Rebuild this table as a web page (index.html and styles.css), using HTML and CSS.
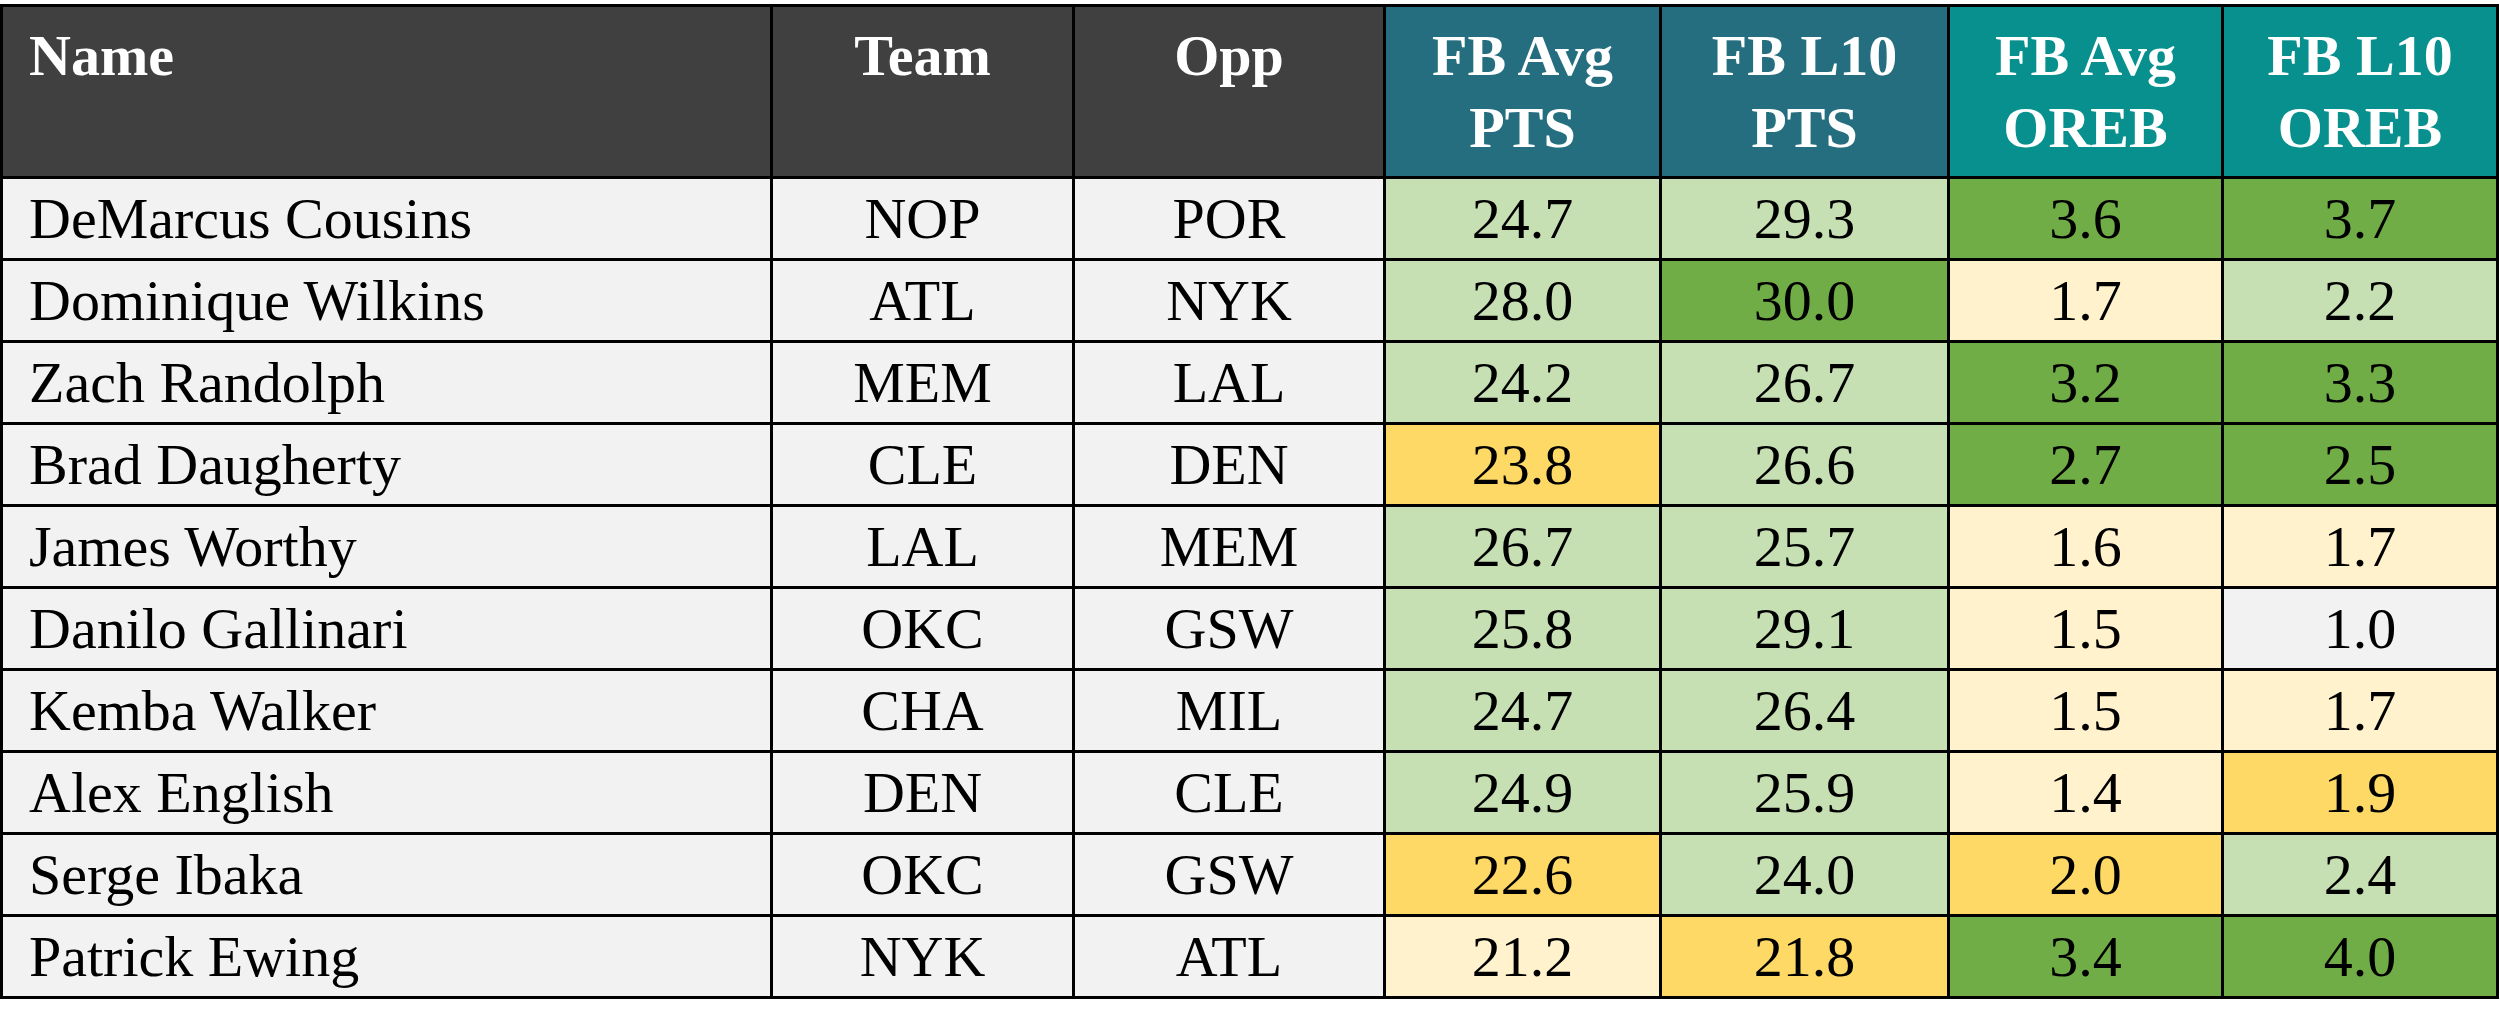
FILE: index.html
```html
<!DOCTYPE html>
<html>
<head>
<meta charset="utf-8">
<link rel="stylesheet" href="styles.css">
</head>
<body>
<table class="stats">
  <colgroup>
    <col class="c-name"><col class="c-team"><col class="c-opp"><col class="c-s1"><col class="c-s2"><col class="c-s3"><col class="c-s4">
  </colgroup>
  <thead>
    <tr>
      <th class="h-dark left">Name</th>
      <th class="h-dark">Team</th>
      <th class="h-dark">Opp</th>
      <th class="h-blue">FB Avg<br>PTS</th>
      <th class="h-blue">FB L10<br>PTS</th>
      <th class="h-teal">FB Avg<br>OREB</th>
      <th class="h-teal">FB L10<br>OREB</th>
    </tr>
  </thead>
  <tbody>
    <tr><td class="name">DeMarcus Cousins</td><td>NOP</td><td>POR</td><td class="lg">24.7</td><td class="lg">29.3</td><td class="dg">3.6</td><td class="dg">3.7</td></tr>
    <tr><td class="name">Dominique Wilkins</td><td>ATL</td><td>NYK</td><td class="lg">28.0</td><td class="dg">30.0</td><td class="ly">1.7</td><td class="lg">2.2</td></tr>
    <tr><td class="name">Zach Randolph</td><td>MEM</td><td>LAL</td><td class="lg">24.2</td><td class="lg">26.7</td><td class="dg">3.2</td><td class="dg">3.3</td></tr>
    <tr><td class="name">Brad Daugherty</td><td>CLE</td><td>DEN</td><td class="yl">23.8</td><td class="lg">26.6</td><td class="dg">2.7</td><td class="dg">2.5</td></tr>
    <tr><td class="name">James Worthy</td><td>LAL</td><td>MEM</td><td class="lg">26.7</td><td class="lg">25.7</td><td class="ly">1.6</td><td class="ly">1.7</td></tr>
    <tr><td class="name">Danilo Gallinari</td><td>OKC</td><td>GSW</td><td class="lg">25.8</td><td class="lg">29.1</td><td class="ly">1.5</td><td class="gr">1.0</td></tr>
    <tr><td class="name">Kemba Walker</td><td>CHA</td><td>MIL</td><td class="lg">24.7</td><td class="lg">26.4</td><td class="ly">1.5</td><td class="ly">1.7</td></tr>
    <tr><td class="name">Alex English</td><td>DEN</td><td>CLE</td><td class="lg">24.9</td><td class="lg">25.9</td><td class="ly">1.4</td><td class="yl">1.9</td></tr>
    <tr><td class="name">Serge Ibaka</td><td>OKC</td><td>GSW</td><td class="yl">22.6</td><td class="lg">24.0</td><td class="yl">2.0</td><td class="lg">2.4</td></tr>
    <tr><td class="name">Patrick Ewing</td><td>NYK</td><td>ATL</td><td class="ly">21.2</td><td class="yl">21.8</td><td class="dg">3.4</td><td class="dg">4.0</td></tr>
  </tbody>
</table>
</body>
</html>
```
FILE: styles.css
```css
html, body {
  margin: 0;
  padding: 0;
  background: #ffffff;
}
body {
  padding-top: 4px;
  font-family: "Liberation Serif", "Times New Roman", serif;
}
.stats {
  border-collapse: collapse;
  table-layout: fixed;
  width: 2496px;
  font-size: 58px;
  color: #000;
}
.c-name { width: 770px; }
.c-team { width: 302px; }
.c-opp { width: 311px; }
.c-s1 { width: 276px; }
.c-s2 { width: 288px; }
.c-s3 { width: 274px; }
.c-s4 { width: 275px; }

.stats th, .stats td {
  border: 3px solid #000;
  padding: 0;
  text-align: center;
}
.stats th {
  height: 172px;
  box-sizing: border-box;
  vertical-align: top;
  padding-top: 13px;
  line-height: 72px;
  font-weight: bold;
  color: #fff;
}
.stats th.left { text-align: left; padding-left: 26px; }
.h-dark { background: #404040; }
.h-blue { background: #246E7F; }
.h-teal { background: #07908D; }

.stats td {
  height: 82px;
  box-sizing: border-box;
  vertical-align: middle;
  line-height: 64px;
  background: #F2F2F2;
}
.stats td.name { text-align: left; padding-left: 26px; }
.stats td.lg { background: #C6E0B4; }
.stats td.dg { background: #70AD47; }
.stats td.yl { background: #FFD966; }
.stats td.ly { background: #FFF2CC; }
.stats td.gr { background: #F2F2F2; }
```
